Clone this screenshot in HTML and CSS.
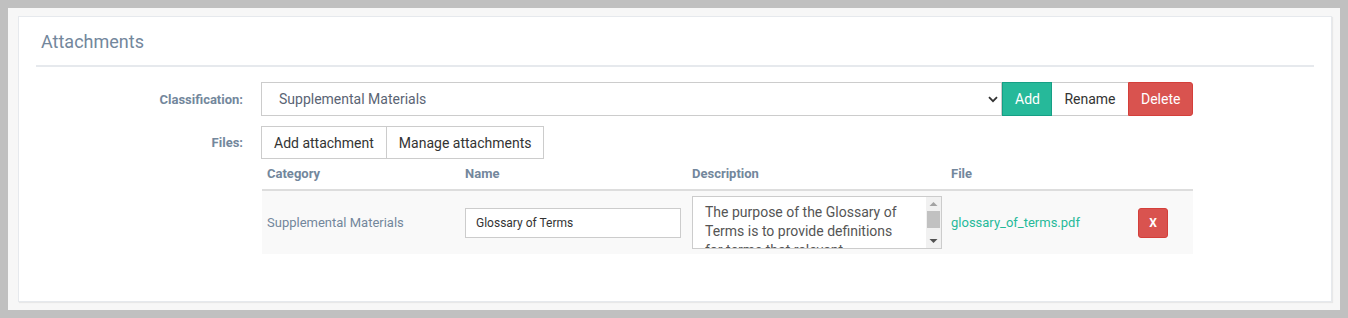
FILE: index.html
```html
<!DOCTYPE html>
<html lang="en">
<head>
  <meta charset="UTF-8" />
  <title>Attachments</title>
  <link rel="stylesheet" href="styles.css">
</head>
<body>
  <div class="panel">
    <div class="panel-title">
      <h2>Attachments</h2>
    </div>
    <div class="form-row">
      <label class="form-label">Classification:</label>
      <div class="input-group">
        <div class="select-wrap">
          <select class="form-control">
            <option>Supplemental Materials</option>
          </select>
          <svg class="caret" width="10" height="7" viewBox="0 0 10 7"><path d="M1 1.2 L5 5.2 L9 1.2" fill="none" stroke="#333" stroke-width="1.8"/></svg>
        </div>
        <button class="btn btn-success">Add</button>
        <button class="btn btn-default">Rename</button>
        <button class="btn btn-danger last">Delete</button>
      </div>
    </div>
    <div class="form-row files-row">
      <label class="form-label">Files:</label>
      <div class="btn-group">
        <button class="btn btn-default bordered">Add attachment</button>
        <button class="btn btn-default bordered">Manage attachments</button>
      </div>
    </div>
    <div class="form-row">
      <div></div>
      <table class="files">
        <thead>
          <tr>
            <th class="c-cat">Category</th>
            <th class="c-name">Name</th>
            <th class="c-desc">Description</th>
            <th class="c-file">File</th>
            <th class="c-act"></th>
          </tr>
        </thead>
        <tbody>
          <tr>
            <td>Supplemental Materials</td>
            <td><input class="name-input" type="text" value="Glossary of Terms"></td>
            <td>
              <div class="desc-wrap">
                <textarea class="desc">The purpose of the Glossary of Terms is to provide definitions for terms that relevant</textarea>
                <div class="scrollbar">
                  <svg class="arrow" width="15" height="14" viewBox="0 0 15 14"><path d="M3.5 9 L7.5 5 L11.5 9 Z" fill="#a3a3a3"/></svg>
                  <div class="thumb"></div>
                  <svg class="arrow" width="15" height="14" viewBox="0 0 15 14"><path d="M3.5 5 L7.5 9 L11.5 5 Z" fill="#505050"/></svg>
                </div>
              </div>
            </td>
            <td><a class="file-link" href="#">glossary_of_terms.pdf</a></td>
            <td><button class="btn-x">X</button></td>
          </tr>
        </tbody>
      </table>
    </div>
  </div>
</body>
</html>
```

FILE: styles.css
```css
:root {
  --text: #73879c;
  --green: #26b99a;
  --red: #d9534f;
  --line: #e6e9ed;
}
* { box-sizing: border-box; }
html { background: #c0c0c0; }
body {
  margin: 8px;
  height: 302px;
  background: #f7f7f7;
  padding: 8px 8px 8px 10px;
  font-family: Roboto, "Liberation Sans", Arial, sans-serif;
  font-size: 13px;
  color: var(--text);
}
.panel {
  background: #fff;
  border: 1px solid var(--line);
  box-shadow: 1px 1px 1px rgba(0,0,0,0.06);
  height: 286px;
  padding: 10px 17px;
}
.panel-title {
  border-bottom: 2px solid var(--line);
  padding: 2px 5px 10px;
  margin-bottom: 15px;
}
h2 {
  margin: 0;
  font-size: 18px;
  font-weight: 400;
  line-height: 26px;
  color: var(--text);
}
.form-row {
  display: grid;
  grid-template-columns: 224px 932px;
  column-gap: 18px;
  align-items: center;
  margin-left: -17px;
}
.form-label {
  text-align: right;
  font-weight: 700;
  font-size: 13px;
}
.files-row { margin-top: 10px; }
.input-group { display: flex; height: 34px; }
.select-wrap { position: relative; flex: 0 0 741px; }
.form-control {
  width: 100%;
  height: 34px;
  border: 1px solid #ccc;
  background: #fff;
  appearance: none;
  -webkit-appearance: none;
  padding: 0 17px;
  font-family: inherit;
  font-size: 14px;
  color: #5a6474;
}
.caret { position: absolute; right: 4px; top: 14px; }
.btn {
  font-family: inherit;
  font-size: 14px;
  padding: 0 12px;
  cursor: pointer;
  border: 1px solid transparent;
  border-radius: 0;
  height: 34px;
}
.btn-success { background: var(--green); color: #fff; border-color: #169f85; width: 50px; }
.btn-default { background: #fff; color: #333; border-color: #ccc; border-left: none; border-right: none; width: 76px; }
.btn-danger { background: var(--red); color: #fff; border-color: #d43f3a; width: 65px; }
.btn-danger.last { border-radius: 0 3px 3px 0; }
.btn-group { display: flex; }
.btn-default.bordered {
  width: auto;
  border: 1px solid #ccc;
  height: 33px;
  padding: 0 12px;
}
.btn-default.bordered + .bordered { border-left: none; }
.files {
  border-collapse: collapse;
  width: 931px;
  margin: 1px 0 0 1px;
  table-layout: fixed;
}
.files th {
  text-align: left;
  font-size: 13px;
  font-weight: 700;
  padding: 5px 5px 6px;
  border-bottom: 2px solid #ddd;
  line-height: 18px;
}
.files td {
  background: #f9f9f9;
  padding: 5px;
  vertical-align: middle;
  height: 63px;
}
.c-cat { width: 198px; }
.c-name { width: 227px; }
.c-desc { width: 259px; }
.c-file { width: 187px; }
.c-act { width: 60px; }
.name-input {
  width: 216px;
  height: 30px;
  border: 1px solid #ccc;
  padding: 0 10px;
  font-family: inherit;
  font-size: 12px;
  color: #333;
  display: block;
}
.desc-wrap { position: relative; width: 250px; height: 53px; }
.desc {
  display: block;
  width: 250px;
  height: 53px;
  border: 1px solid #ccc;
  padding: 6px 29px 5px 12px;
  font-family: inherit;
  font-size: 14px;
  line-height: 19px;
  color: #555;
  resize: none;
  overflow: hidden;
}
.scrollbar {
  position: absolute;
  top: 1px;
  right: 1px;
  bottom: 1px;
  width: 15px;
  background: #f1f1f1;
  display: flex;
  flex-direction: column;
}
.arrow { display: block; flex: 0 0 14px; }
.thumb { height: 17px; margin: 0 1px; background: #c1c1c1; }
.scrollbar .thumb + .arrow { margin-top: auto; }
.file-link { color: var(--green); text-decoration: none; font-size: 13px; }
.btn-x {
  width: 30px;
  height: 30px;
  background: var(--red);
  color: #fff;
  border: 1px solid #d43f3a;
  border-radius: 3px;
  font-family: inherit;
  font-size: 12px;
  font-weight: 700;
  padding: 0;
}
```
